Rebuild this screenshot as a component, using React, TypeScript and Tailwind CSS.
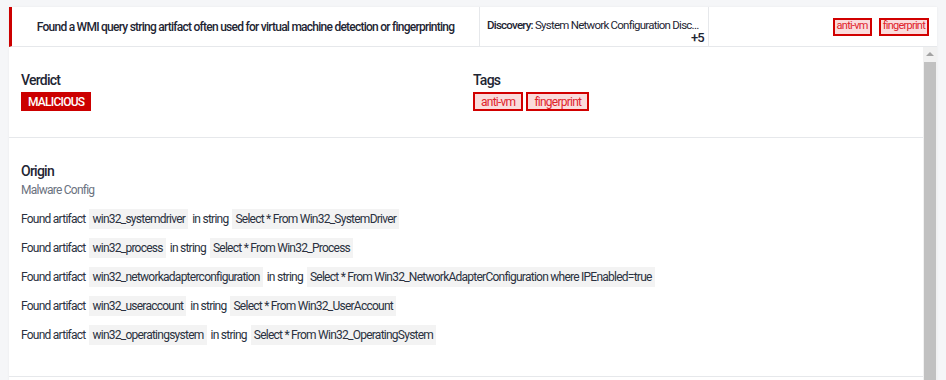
import React from "react";

const rows: [string, string][] = [
  ["win32_systemdriver", "Select * From Win32_SystemDriver"],
  ["win32_process", "Select * From Win32_Process"],
  ["win32_networkadapterconfiguration", "Select * From Win32_NetworkAdapterConfiguration where IPEnabled=true"],
  ["win32_useraccount", "Select * From Win32_UserAccount"],
  ["win32_operatingsystem", "Select * From Win32_OperatingSystem"],
];

export default function App() {
  return (
    <div
      className="w-[946px] h-[380px] overflow-hidden bg-[#f5f6f8] pt-[7px] pl-[9px] pr-[9px] text-[#1e2533] tracking-[-0.047em]"
      style={{ fontFamily: "Roboto, 'Liberation Sans', sans-serif" }}
    >
      <div className="bg-white shadow-[0_0_2px_rgba(0,0,0,0.06)]">
        {/* top row */}
        <div className="flex h-[40px] border-b border-[#e6e8eb] border-l-[3px] border-l-[#cc0000]">
          <div className="w-[467px] flex items-center justify-center text-[12px] font-medium">
            Found a WMI query string artifact often used for virtual machine detection or fingerprinting
          </div>
          <div className="w-[229px] border-l border-[#e6e8eb] pl-[7px] pr-[4px] pt-[12px] flex flex-col text-[11.5px] leading-[13px]">
            <div className="truncate">
              <span className="font-medium">Discovery: </span>
              <span>System Network Configuration Discovery</span>
            </div>
            <div className="text-right text-[13px] font-medium leading-[12px]">+5</div>
          </div>
          <div className="flex-1 border-l border-[#e6e8eb] flex items-center justify-end gap-[7px] pr-[8px]">
            <span className="flex items-center h-[18px] border-2 border-[#d10000] bg-[#fadcdc] text-[#e0232b] text-[11px] px-[2px]">anti-vm</span>
            <span className="flex items-center h-[18px] border-2 border-[#d10000] bg-[#fadcdc] text-[#e0232b] text-[11px] px-[2px]">fingerprint</span>
          </div>
        </div>

        {/* body */}
        <div className="flex">
          <div className="w-[914px] bg-white">
            <div className="grid grid-cols-[452px_1fr] pl-[12px] pt-[23px] pb-[26px] border-b border-[#e6e8eb]">
              <div className="flex flex-col items-start">
                <div className="text-[14px] font-medium leading-[20px]">Verdict</div>
                <div className="mt-[2px] flex items-center h-[19px] bg-[#cc0000] text-white text-[12px] font-medium px-[7px]">
                  MALICIOUS
                </div>
              </div>
              <div className="flex flex-col items-start">
                <div className="text-[14px] font-medium leading-[20px]">Tags</div>
                <div className="mt-[2px] flex gap-[3px]">
                  <span className="flex items-center h-[19px] border-2 border-[#d10000] bg-[#fadcdc] text-[#e0232b] text-[12px] px-[6px]">anti-vm</span>
                  <span className="flex items-center h-[19px] border-2 border-[#d10000] bg-[#fadcdc] text-[#e0232b] text-[12px] px-[6px]">fingerprint</span>
                </div>
              </div>
            </div>
            <div className="pl-[12px] pt-[23px] pb-[31px] border-b border-[#e6e8eb]">
              <div className="text-[14px] font-medium leading-[20px]">Origin</div>
              <div className="mt-[1px] text-[12px] text-[#6b7280] leading-[16px]">Malware Config</div>
              <div className="mt-[11px] flex flex-col gap-[9px]">
                {rows.map(([a, s]) => (
                  <div key={a} className="flex items-center gap-[3px] text-[12px] h-[20px] text-[#2a3140]">
                    <span className="mr-[1px]">Found artifact</span>
                    <span className="bg-[#f3f3f3] h-[20px] flex items-center px-[3px]">{a}</span>
                    <span className="px-[1px]">in string</span>
                    <span className="bg-[#f3f3f3] h-[20px] flex items-center px-[3px]">{s}</span>
                  </div>
                ))}
              </div>
            </div>
          </div>
          {/* scrollbar */}
          <div className="w-[14px] bg-[#f1f1f1] flex flex-col items-center">
            <svg width="10" height="14" viewBox="0 0 10 14">
              <path d="M1 9 L5 5 L9 9 Z" fill="#a3a3a3" />
            </svg>
            <div className="w-[12px] h-[400px] bg-[#c1c1c1] mt-[1px]" />
          </div>
        </div>
      </div>
    </div>
  );
}
